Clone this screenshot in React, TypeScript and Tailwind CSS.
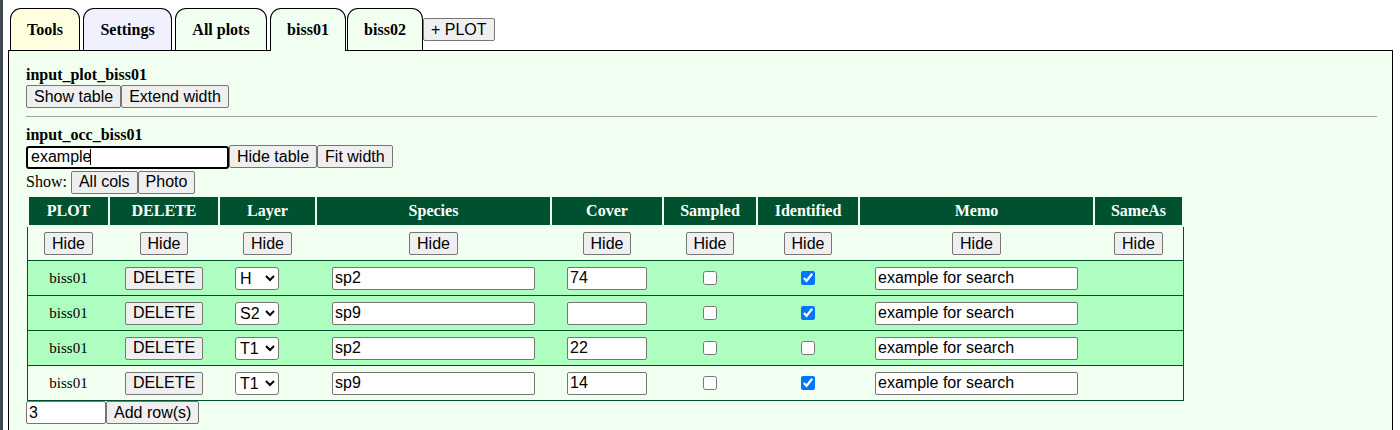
import React from 'react';

const tabs = [
  { name: 'Tools', cls: 'w-[70px] ml-[2px] mr-[3px] bg-[#ffffe0]' },
  { name: 'Settings', cls: 'w-[89px] mr-[3px] bg-[#f0f0ff]' },
  { name: 'All plots', cls: 'w-[92px] mr-[3px] bg-[#f0fff0]' },
  { name: 'biss01', cls: 'w-[76px] mr-[1px] bg-[#f0fff0] h-[43px] -mb-px relative z-10', active: true },
  { name: 'biss02', cls: 'w-[76px] bg-[#f0fff0]' },
];

const columns = ['PLOT', 'DELETE', 'Layer', 'Species', 'Cover', 'Sampled', 'Identified', 'Memo', 'SameAs'];

const rows = [
  { layer: 'H', species: 'sp2', cover: '74', sampled: false, identified: true, memo: 'example for search', hl: true },
  { layer: 'S2', species: 'sp9', cover: '', sampled: false, identified: true, memo: 'example for search', hl: true },
  { layer: 'T1', species: 'sp2', cover: '22', sampled: false, identified: false, memo: 'example for search', hl: true },
  { layer: 'T1', species: 'sp9', cover: '14', sampled: false, identified: true, memo: 'example for search', hl: false },
];

const gridCols = 'grid grid-cols-[79px_108px_95px_233px_110px_92px_100px_233px_87px] gap-x-[2px]';

const btn =
  "h-[23px] px-[7px] bg-[#efefef] border border-[#767676] rounded-[2px] text-[16px] leading-[20px] text-black font-['Liberation_Sans',Arial,sans-serif] whitespace-nowrap";

const input =
  "h-[23px] px-[2px] bg-white border border-[#767676] rounded-[2px] text-[16px] text-black font-['Liberation_Sans',Arial,sans-serif] outline-none";

const Btn: React.FC<{ children: React.ReactNode }> = ({ children }) => (
  <button type="button" className={btn}>
    {children}
  </button>
);

const App: React.FC = () => {
  return (
    <div className="flex h-[430px] overflow-hidden bg-white text-black font-['Liberation_Serif',serif]">
      <div className="w-[3px] shrink-0 bg-[#3d4753]" />
      <div className="flex-1 flex flex-col pl-[5px] pr-[7px] pt-[8px]">
        {/* Tabs */}
        <div className="flex items-end">
          {tabs.map((tab) => (
            <div
              key={tab.name}
              className={`${tab.active ? '' : 'h-[42px]'} ${tab.cls} flex items-center justify-center border border-b-0 border-black rounded-t-[11px] text-[16px] font-bold`}
            >
              {tab.name}
            </div>
          ))}
          <button type="button" className={`${btn} mb-[9px]`}>
            + PLOT
          </button>
        </div>

        {/* Panel */}
        <div className="shrink-0 min-h-[420px] border border-black bg-[#f0fff0] pl-[17px] pr-[15px] pt-[15px]">
          <div className="text-[16px] leading-[18px] font-bold">input_plot_biss01</div>
          <div className="flex mt-[1px]">
            <Btn>Show table</Btn>
            <Btn>Extend width</Btn>
          </div>
          <div className="border-t border-[#a0a0a0] mt-[8px] mb-[9px]" />

          <div className="text-[16px] leading-[18px] font-bold">input_occ_biss01</div>
          <div className="flex mt-[1px]">
            <div className="relative">
              <input
                className="h-[23px] w-[203px] pl-[3px] bg-white border-2 border-black rounded-[3px] text-[16px] text-black font-['Liberation_Sans',Arial,sans-serif] outline-none"
                defaultValue="example"
                readOnly
              />
              <span className="absolute left-[64px] top-[4px] w-px h-[16px] bg-black" />
            </div>
            <Btn>Hide table</Btn>
            <Btn>Fit width</Btn>
          </div>
          <div className="flex items-center mt-[1px]">
            <span className="text-[16px] mr-[4px]">Show:</span>
            <Btn>All cols</Btn>
            <Btn>Photo</Btn>
          </div>

          {/* Table */}
          <div className="ml-[1px] mt-[1px] w-[1157px]">
            <div className={`${gridCols} px-[2px] py-[2px]`}>
              {columns.map((c) => (
                <div
                  key={c}
                  className="h-[28px] flex items-center justify-center bg-[#005130] text-white text-[16px] font-bold"
                >
                  {c}
                </div>
              ))}
            </div>
            <div className="border-x border-b border-[#00502f]">
              <div className={`${gridCols} pl-[1px] h-[33px] items-center bg-[#f0fff0]`}>
                {columns.map((c) => (
                  <div key={c} className="flex justify-center">
                    <Btn>Hide</Btn>
                  </div>
                ))}
              </div>
              {rows.map((r, i) => (
                <div
                  key={i}
                  className={`${gridCols} pl-[1px] h-[35px] items-center border-t border-[#00502f] ${
                    r.hl ? 'bg-[#aeffbf]' : 'bg-[#f0fff0]'
                  }`}
                >
                  <div className="flex justify-center text-[15px]">biss01</div>
                  <div className="flex justify-center">
                    <Btn>DELETE</Btn>
                  </div>
                  <div className="flex pl-[15px]">
                    <select
                      defaultValue={r.layer}
                      className="h-[23px] w-[44px] bg-white border border-[#767676] rounded-[3px] text-[16px] text-black font-['Liberation_Sans',Arial,sans-serif]"
                    >
                      <option value="H">H</option>
                      <option value="S2">S2</option>
                      <option value="T1">T1</option>
                    </select>
                  </div>
                  <div className="flex justify-center">
                    <input className={`${input} w-[203px]`} defaultValue={r.species} />
                  </div>
                  <div className="flex justify-center">
                    <input className={`${input} w-[80px]`} defaultValue={r.cover} />
                  </div>
                  <div className="flex justify-center">
                    <input type="checkbox" className="w-[14px] h-[14px] m-0" defaultChecked={r.sampled} />
                  </div>
                  <div className="flex justify-center">
                    <input type="checkbox" className="w-[14px] h-[14px] m-0" defaultChecked={r.identified} />
                  </div>
                  <div className="flex justify-center">
                    <input className={`${input} w-[203px]`} defaultValue={r.memo} />
                  </div>
                  <div />
                </div>
              ))}
            </div>
          </div>

          <div className="flex">
            <input className={`${input} w-[80px]`} defaultValue="3" />
            <Btn>Add row(s)</Btn>
          </div>
        </div>
      </div>
    </div>
  );
};

export default App;
